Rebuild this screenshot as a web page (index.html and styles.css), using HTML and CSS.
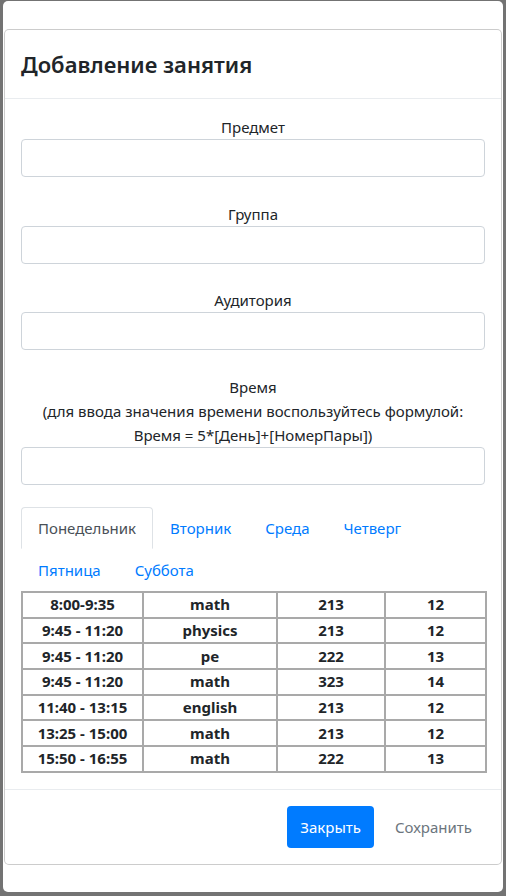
FILE: index.html
```html
<!DOCTYPE html>
<html lang="ru">
<head>
<meta charset="utf-8">
<title>Добавление занятия</title>
<link rel="stylesheet" href="styles.css">
</head>
<body>
<div class="backdrop">
  <div class="dialog">
    <div class="modal-content">
      <div class="modal-header">
        <h5 class="modal-title">Добавление занятия</h5>
      </div>
      <div class="modal-body">
        <div class="form-group">
          <label class="label">Предмет</label>
          <input class="form-control" type="text">
        </div>
        <div class="form-group">
          <label class="label">Группа</label>
          <input class="form-control" type="text">
        </div>
        <div class="form-group">
          <label class="label">Аудитория</label>
          <input class="form-control" type="text">
        </div>
        <div class="form-group last">
          <label class="label">Время<br>(для ввода значения времени воспользуйтесь формулой:<br>Время = 5*[День]+[НомерПары])</label>
          <input class="form-control" type="text">
        </div>
        <ul class="nav-tabs">
          <li><a class="nav-link active">Понедельник</a></li>
          <li><a class="nav-link">Вторник</a></li>
          <li><a class="nav-link">Среда</a></li>
          <li><a class="nav-link">Четверг</a></li>
          <li><a class="nav-link">Пятница</a></li>
          <li><a class="nav-link">Суббота</a></li>
        </ul>
        <table class="schedule">
          <colgroup>
            <col class="c1"><col class="c2"><col class="c3"><col class="c4">
          </colgroup>
          <tbody>
            <tr><td>8:00-9:35</td><td>math</td><td>213</td><td>12</td></tr>
            <tr><td>9:45 - 11:20</td><td>physics</td><td>213</td><td>12</td></tr>
            <tr><td>9:45 - 11:20</td><td>pe</td><td>222</td><td>13</td></tr>
            <tr><td>9:45 - 11:20</td><td>math</td><td>323</td><td>14</td></tr>
            <tr><td>11:40 - 13:15</td><td>english</td><td>213</td><td>12</td></tr>
            <tr><td>13:25 - 15:00</td><td>math</td><td>213</td><td>12</td></tr>
            <tr><td>15:50 - 16:55</td><td>math</td><td>222</td><td>13</td></tr>
          </tbody>
        </table>
      </div>
      <div class="modal-footer">
        <button class="btn btn-primary" type="button">Закрыть</button>
        <button class="btn btn-link" type="button">Сохранить</button>
      </div>
    </div>
  </div>
</div>
</body>
</html>
```

FILE: styles.css
```css
* { box-sizing: border-box; }

html, body {
  margin: 0;
  padding: 0;
  height: 100%;
}

body {
  background: #737373;
  font-family: "Segoe UI", "Noto Sans", "Open Sans", sans-serif;
  font-size: 15px;
  line-height: 24px;
  color: #212529;
}

.backdrop {
  padding: 1px 3px 4px 3px;
}

.dialog {
  background: #fff;
  border-radius: 5px;
  height: 891px;
  padding: 28px 1px 0 1px;
}

.modal-content {
  border: 1px solid rgba(0, 0, 0, 0.2);
  border-radius: 5px;
  background: #fff;
}

.modal-header {
  padding: 16px;
  border-bottom: 1px solid #e9ecef;
}

.modal-title {
  margin: 0;
  font-size: 22px;
  font-weight: 600;
  line-height: 36px;
}

.modal-body {
  padding: 16px;
}

.form-group {
  margin-bottom: 24.5px;
  text-align: center;
}

.form-group.last {
  margin-bottom: 22.5px;
}

.label {
  display: block;
  text-align: center;
}

.form-control {
  display: block;
  width: 100%;
  height: 38px;
  padding: 6px 12px;
  font: inherit;
  border: 1px solid #ced4da;
  border-radius: 4px;
  background: #fff;
}

.nav-tabs {
  list-style: none;
  margin: 0;
  padding: 0;
  display: flex;
  flex-wrap: wrap;
}

.nav-tabs li {
  display: block;
}

.nav-link {
  display: block;
  padding: 8px 16px;
  border: 1px solid transparent;
  border-top-left-radius: 4px;
  border-top-right-radius: 4px;
  color: #007bff;
  text-decoration: none;
}

.nav-link.active {
  color: #495057;
  border-color: #dee2e6 #dee2e6 transparent;
}

.schedule {
  width: 100%;
  border-collapse: collapse;
  table-layout: fixed;
  font-weight: 700;
  text-align: center;
}

.schedule .c1 { width: 121px; }
.schedule .c2 { width: 134px; }
.schedule .c3 { width: 108px; }
.schedule .c4 { width: 101px; }

.schedule td {
  border: 2px solid #a9a9a9;
  padding: 0;
  height: 25.7px;
  line-height: 21px;
}

.modal-footer {
  display: flex;
  justify-content: flex-end;
  align-items: center;
  padding: 12px;
  border-top: 1px solid #e9ecef;
}

.btn {
  margin: 4px;
  padding: 8px 12px;
  font: inherit;
  line-height: 24px;
  border: 1px solid transparent;
  border-radius: 4px;
  cursor: pointer;
}

.btn-primary {
  background: #007bff;
  color: #fff;
}

.btn-link {
  background: transparent;
  color: #6c757d;
}
```
